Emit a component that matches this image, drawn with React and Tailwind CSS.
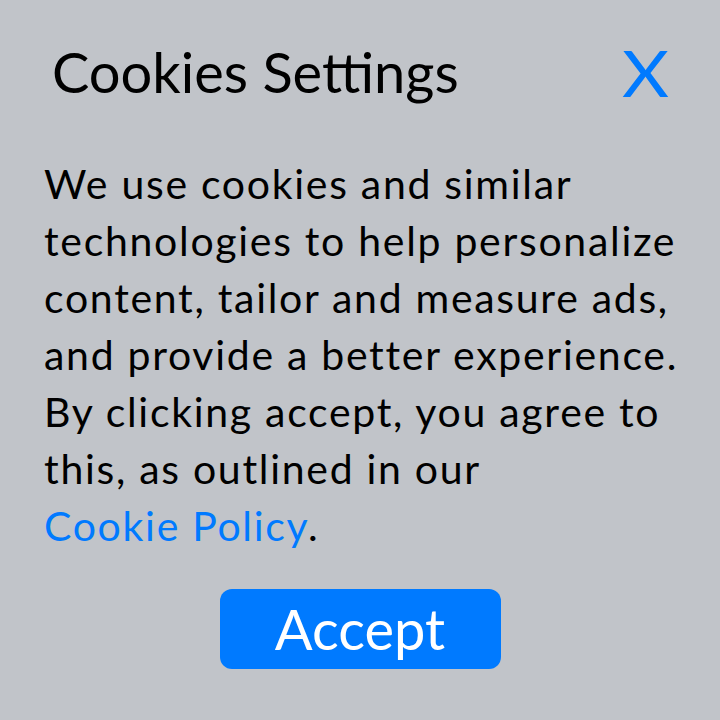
export default function App() {
  return (
    <div
      className="w-[720px] h-[720px] bg-[#c1c4c9] text-black overflow-hidden"
      style={{ fontFamily: 'Lato, "Open Sans", sans-serif' }}
    >
      {/* ── Header ─────────────────────────────── */}
      <div className="flex items-center justify-between pl-[52px] pr-[54px] pt-[34px] h-[110px]">
        <h1 className="text-[56px] leading-none font-normal">Cookies Settings</h1>
        <button className="text-[63px] leading-none text-[#007aff] scale-x-[1.15]">X</button>
      </div>

      {/* ── Body ───────────────────────────────── */}
      <p className="pl-[44px] pr-[20px] mt-[45px] text-[41px] leading-[57px] tracking-[1.7px]">
        We use cookies and similar
        <br />
        technologies to help personalize
        <br />
        content, tailor and measure ads,
        <br />
        and provide a better experience.
        <br />
        By clicking accept, you agree to
        <br />
        this, as outlined in our
        <br />
        <a className="text-[#007aff]">Cookie Policy</a>.
      </p>

      {/* ── Accept ─────────────────────────────── */}
      <div className="flex justify-center mt-[35px]">
        <button className="w-[281px] h-[80px] rounded-[12px] bg-[#007aff] text-white text-[56px] leading-none">
          Accept
        </button>
      </div>
    </div>
  )
}
